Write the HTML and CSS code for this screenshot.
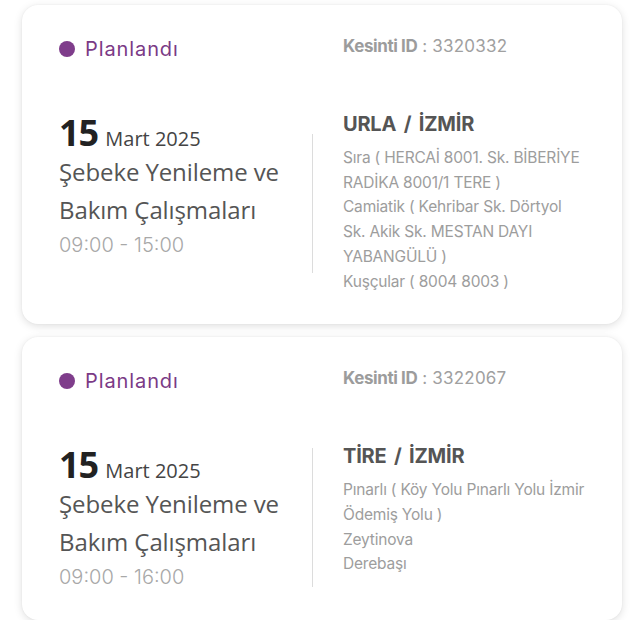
FILE: index.html
```html
<!DOCTYPE html>
<html lang="tr">
<head>
<meta charset="utf-8">
<title>Kesintiler</title>
<link rel="stylesheet" href="styles.css">
</head>
<body>
<div class="list">
  <div class="card">
    <div class="head">
      <div class="status"><span class="dot"></span><span class="status-text">Planlandı</span></div>
      <div class="kid"><b>Kesinti ID</b> : 3320332</div>
    </div>
    <div class="body">
      <div class="left">
        <div class="date"><span class="day">15</span> <span class="month">Mart 2025</span></div>
        <div class="title">Şebeke Yenileme ve Bakım Çalışmaları</div>
        <div class="time">09:00 - 15:00</div>
      </div>
      <div class="divider"></div>
      <div class="right">
        <div class="place">URLA / İZMİR</div>
        <div class="addr">Sıra ( HERCAİ 8001. Sk. BİBERİYE RADİKA 8001/1 TERE )</div>
        <div class="addr">Camiatik ( Kehribar Sk. Dörtyol Sk. Akik Sk. MESTAN DAYI YABANGÜLÜ )</div>
        <div class="addr">Kuşçular ( 8004 8003 )</div>
      </div>
    </div>
  </div>
  <div class="card">
    <div class="head">
      <div class="status"><span class="dot"></span><span class="status-text">Planlandı</span></div>
      <div class="kid"><b>Kesinti ID</b> : 3322067</div>
    </div>
    <div class="body">
      <div class="left">
        <div class="date"><span class="day">15</span> <span class="month">Mart 2025</span></div>
        <div class="title">Şebeke Yenileme ve Bakım Çalışmaları</div>
        <div class="time">09:00 - 16:00</div>
      </div>
      <div class="divider"></div>
      <div class="right">
        <div class="place">TİRE / İZMİR</div>
        <div class="addr">Pınarlı ( Köy Yolu Pınarlı Yolu İzmir Ödemiş Yolu )</div>
        <div class="addr">Zeytinova</div>
        <div class="addr">Derebaşı</div>
      </div>
    </div>
  </div>
</div>
</body>
</html>
```

FILE: styles.css
```css
html, body {
  margin: 0;
  padding: 0;
  background: #ffffff;
}
body {
  font-family: "Open Sans", "Noto Sans", sans-serif;
}
.list {
  display: flex;
  flex-direction: column;
  gap: 13px;
  padding: 5px 0 0 22px;
}
.card {
  width: 600px;
  box-sizing: border-box;
  background: #fff;
  border-radius: 16px;
  box-shadow: 0 2px 8px rgba(0, 0, 0, 0.13), 0 0 2px rgba(0, 0, 0, 0.05);
  padding: 32px 37px 30px 37px;
}
.head {
  display: grid;
  grid-template-columns: 284px 1fr;
  align-items: center;
}
.status {
  display: flex;
  align-items: center;
  gap: 10px;
}
.dot {
  width: 16px;
  height: 16px;
  border-radius: 50%;
  background: #7f3d8b;
  flex: none;
}
.status-text {
  font-family: "Inter", sans-serif;
  font-size: 20px;
  color: #7b3a86;
  line-height: 24px;
  letter-spacing: 0.9px;
}
.kid {
  font-family: "Inter", sans-serif;
  font-size: 17px;
  color: #a0a0a0;
  letter-spacing: 0.2px;
  line-height: 22px;
  margin-top: -6px;
}
.kid b {
  font-weight: 700;
  color: #9c9c9c;
  letter-spacing: -0.4px;
}
.body {
  display: grid;
  grid-template-columns: 253px 1px 1fr;
  margin-top: 52px;
}
.left {
  align-self: start;
}
.date {
  line-height: 40px;
}
.day {
  font-size: 36px;
  font-weight: 700;
  color: #222;
  letter-spacing: -1px;
  margin-right: 3px;
}
.month {
  font-size: 20px;
  color: #444;
}
.title {
  font-size: 24px;
  color: #555;
  line-height: 38px;
  margin-top: -7px;
  letter-spacing: -0.1px;
}
.time {
  font-family: "Inter", sans-serif;
  font-weight: 300;
  font-size: 20px;
  color: #a8a8a8;
  line-height: 26px;
  margin-top: 3px;
}
.divider {
  background: #dcdcdc;
  height: 139px;
  align-self: center;
}
.right {
  padding-left: 30px;
}
.place {
  font-family: "Inter", sans-serif;
  font-weight: 700;
  font-size: 20px;
  color: #555;
  line-height: 30px;
  letter-spacing: -0.2px;
  word-spacing: 3px;
  margin-bottom: 7px;
  margin-top: -4px;
}
.addr {
  font-family: "Inter", sans-serif;
  font-size: 15.5px;
  color: #9d9d9d;
  line-height: 24.7px;
  letter-spacing: -0.2px;
}
```
